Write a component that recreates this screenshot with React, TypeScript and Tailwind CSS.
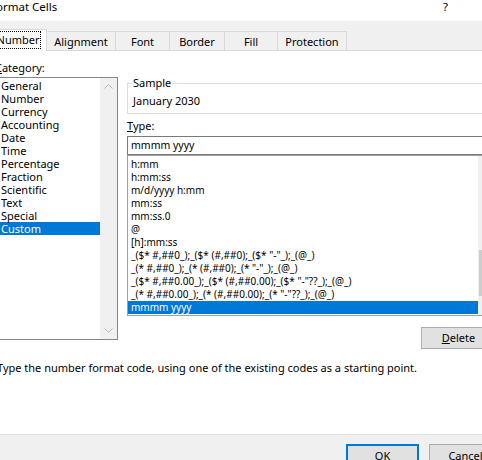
const tabs = [
  { label: "Number", width: "w-[55px]" },
  { label: "Alignment", width: "w-[69px]" },
  { label: "Font", width: "w-[54px]" },
  { label: "Border", width: "w-[55px]" },
  { label: "Fill", width: "w-[53px]" },
  { label: "Protection", width: "w-[69px]" },
];

const categories = [
  "General",
  "Number",
  "Currency",
  "Accounting",
  "Date",
  "Time",
  "Percentage",
  "Fraction",
  "Scientific",
  "Text",
  "Special",
  "Custom",
];

const formats = [
  "h:mm",
  "h:mm:ss",
  "m/d/yyyy h:mm",
  "mm:ss",
  "mm:ss.0",
  "@",
  "[h]:mm:ss",
  '_($* #,##0_);_($* (#,##0);_($* "-"_);_(@_)',
  '_(* #,##0_);_(* (#,##0);_(* "-"_);_(@_)',
  '_($* #,##0.00_);_($* (#,##0.00);_($* "-"??_);_(@_)',
  '_(* #,##0.00_);_(* (#,##0.00);_(* "-"??_);_(@_)',
  "mmmm yyyy",
];

function Chevron({ up }: { up?: boolean }) {
  return (
    <svg width="9" height="5" viewBox="0 0 9 5" fill="none">
      <path
        d={up ? "M0.5 4.5 L4.5 0.5 L8.5 4.5" : "M0.5 0.5 L4.5 4.5 L8.5 0.5"}
        stroke="#b8b8b8"
        strokeWidth="1"
      />
    </svg>
  );
}

export default function App() {
  return (
    <div className="w-[482px] h-[460px] overflow-hidden bg-white text-[11px] text-black font-['Noto_Sans',sans-serif]">
      <div className="ml-[-8px] w-[510px] flex flex-col">
        {/* title bar */}
        <div className="h-[21px] flex justify-between text-[11.5px] leading-[14px]">
          <span className="ml-[-2px]">Format Cells</span>
          <span className="mr-[54px]">?</span>
        </div>

        {/* tab strip */}
        <div className="h-[30px] flex items-end bg-[#f0f0f0] border-b border-[#d9d9d9]">
          {tabs.map((t) =>
            t.label === "Number" ? (
              <div
                key={t.label}
                className={`${t.width} h-[22px] -mb-px bg-white border border-b-0 border-[#d9d9d9] flex justify-center pt-[1px] pr-[3px]`}
              >
                <span className="h-[18px] leading-[16px] px-[1px] border border-dotted border-black">
                  {t.label}
                </span>
              </div>
            ) : (
              <div
                key={t.label}
                className={`${t.width} h-[19px] border-t border-r border-[#d9d9d9] flex items-center justify-center pt-[2px] leading-[14px]`}
              >
                {t.label}
              </div>
            )
          )}
        </div>

        {/* tab page */}
        <div className="h-[383px] bg-white flex flex-col pt-[10px] pl-[3px] pr-[6px]">
          <div className="flex items-start gap-[9px]">
            {/* category column */}
            <div className="w-[123px] flex flex-col">
              <div className="leading-[14px]">
                <span className="underline">C</span>ategory:
              </div>
              <div className="mt-[2px] h-[263px] border border-[#828790] flex">
                <div className="flex-1 pt-[1px]">
                  {categories.map((c) => (
                    <div
                      key={c}
                      className={`h-[13px] leading-[13px] pl-[5px] ${
                        c === "Custom" ? "bg-[#0078d7] text-white" : ""
                      }`}
                    >
                      {c}
                    </div>
                  ))}
                </div>
                <div className="w-[17px] bg-[#f0f0f0] flex flex-col justify-between">
                  <div className="h-[17px] flex items-center justify-center">
                    <Chevron up />
                  </div>
                  <div className="h-[17px] flex items-center justify-center">
                    <Chevron />
                  </div>
                </div>
              </div>
            </div>

            {/* sample / type column */}
            <div className="flex-1 flex flex-col">
              <fieldset className="mt-[15px] border border-[#dcdcdc] px-[4px] pb-[5px]">
                <legend className="px-[1px] leading-[14px]">Sample</legend>
                <div className="pt-[4px] pl-[1px] leading-[14px]">January 2030</div>
              </fieldset>

              <div className="mt-[5px] leading-[14px]">
                <span className="underline">T</span>ype:
              </div>
              <div className="mt-[3px] h-[19px] border border-[#7a7a7a] pl-[3px] text-[10.5px] leading-[17px]">
                mmmm yyyy
              </div>
              <div className="h-[161px] border border-[#a0a0a0] flex text-[10px]">
                <div className="flex-1 pt-[2px] overflow-hidden">
                  {formats.map((f) => (
                    <div
                      key={f}
                      className={`h-[13px] leading-[13px] pl-[3px] whitespace-nowrap ${
                        f === "mmmm yyyy" ? "bg-[#0078d7] text-white" : ""
                      }`}
                    >
                      {f}
                    </div>
                  ))}
                </div>
                <div className="w-[17px] bg-[#f0f0f0]">
                  <div className="mt-[94px] h-[46px] mx-[1px] bg-[#cdcdcd]" />
                </div>
              </div>

              <button
                type="button"
                className="self-end mt-[11px] w-[75px] h-[22px] bg-[#e1e1e1] border border-[#adadad] flex items-center justify-center leading-[14px]"
              >
                <span>
                  <span className="underline">D</span>elete
                </span>
              </button>
            </div>
          </div>

          <div className="mt-[12px] pl-[2px] leading-[14px]">
            Type the number format code, using one of the existing codes as a starting point.
          </div>
        </div>

        {/* footer */}
        <div className="h-[40px] bg-[#f0f0f0] border-t border-[#dfdfdf] flex justify-end gap-[10px] pt-[9px]">
          <button
            type="button"
            className="w-[73px] h-[23px] bg-[#e1e1e1] border-2 border-[#0078d7] flex items-center justify-center leading-[14px]"
          >
            OK
          </button>
          <button
            type="button"
            className="w-[73px] h-[23px] bg-[#e1e1e1] border border-[#adadad] flex items-center justify-center leading-[14px]"
          >
            Cancel
          </button>
        </div>
      </div>
    </div>
  );
}
